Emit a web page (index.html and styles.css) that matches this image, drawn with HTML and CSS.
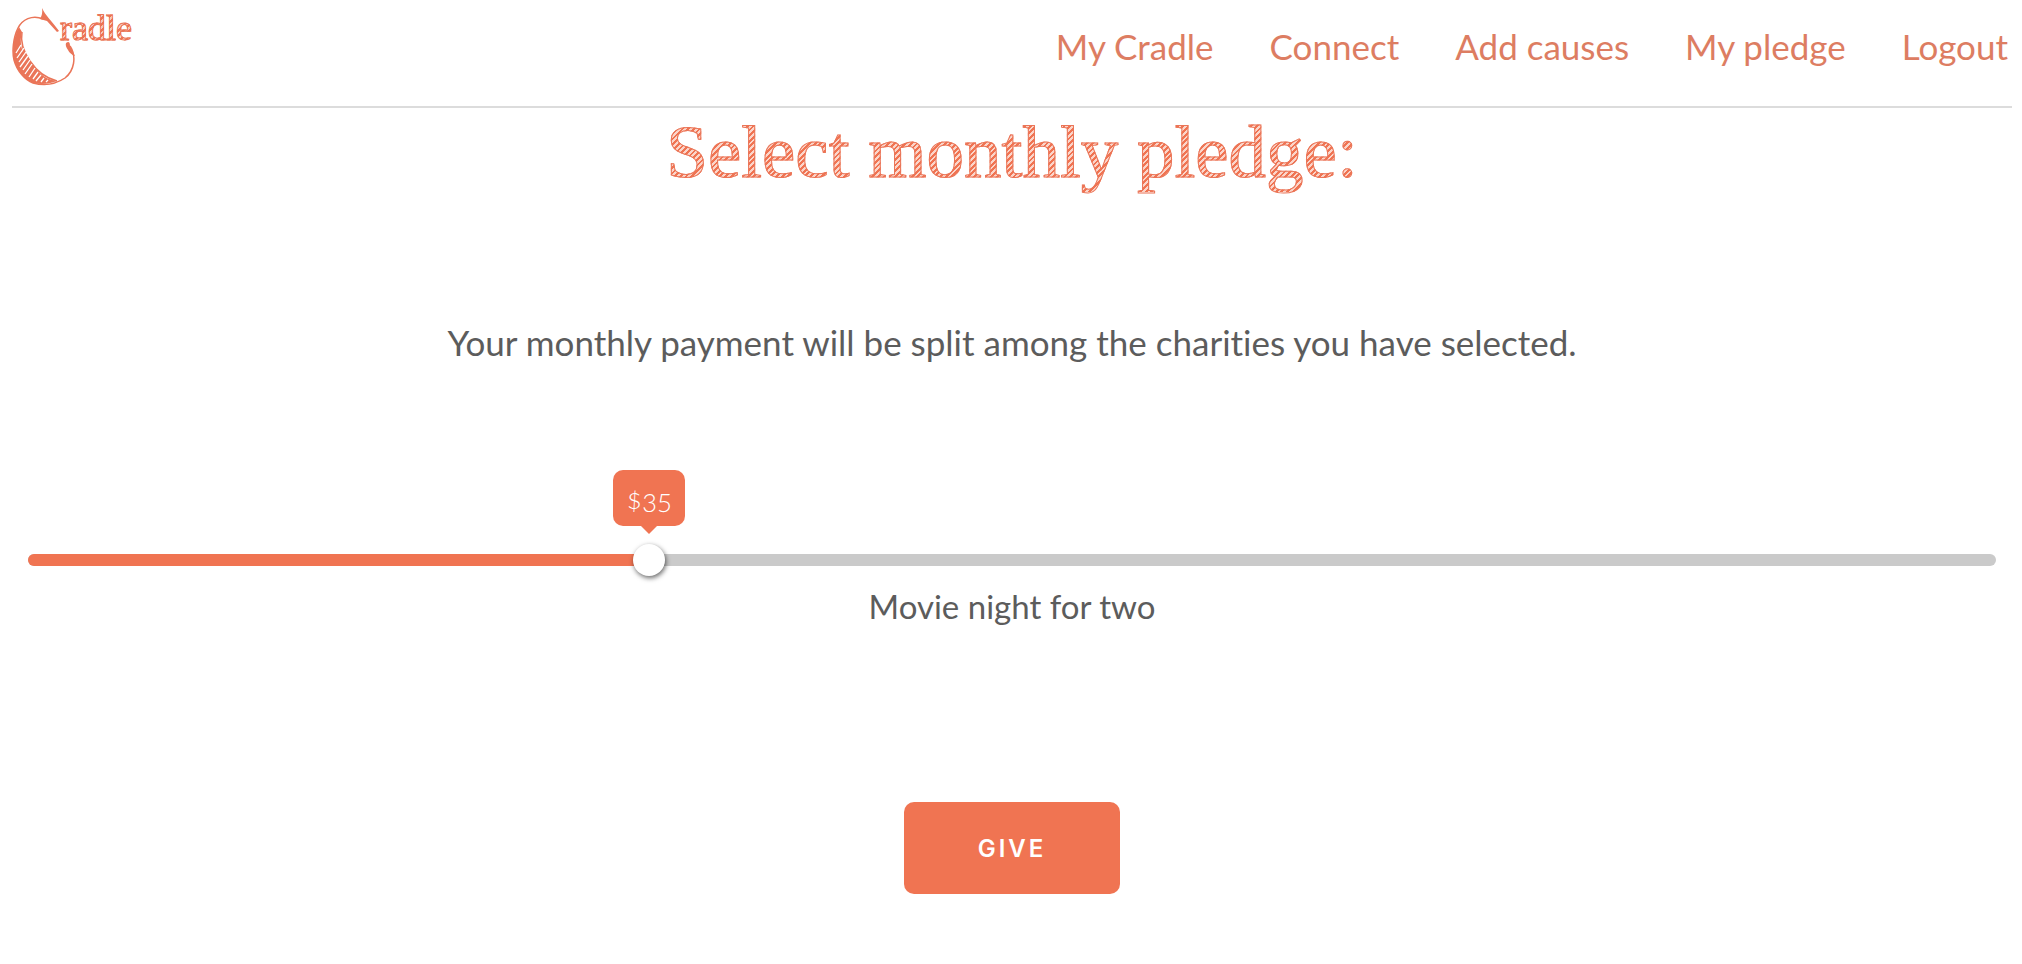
FILE: index.html
```html
<!DOCTYPE html>
<html lang="en">
<head>
<meta charset="utf-8">
<meta name="viewport" content="width=device-width, initial-scale=1">
<title>Cradle</title>
<link rel="stylesheet" href="styles.css">
</head>
<body>
<header class="header">
  <a class="logo" href="#" aria-label="Cradle">
    <svg class="logo-mark" viewBox="0 0 64 78" aria-hidden="true">
      <path class="logo-fill" d="M30 0 C33 7 40 13 47 23 L45 24 L35 13 L28 11 Q31 6 30 0Z"/>
      <path class="logo-line" d="M31 11 C20 6 10 12 6 20 C1 30 0 44 2 52 C5 63 13 72 21 75 C32 78 44 76 53 70 C62 63 65 49 58 38"/>
      <path class="logo-fill" d="M7 19 C1 30 0 44 2 52 C5 63 13 72 21 75 C29 77 37 76 45 73 C38 72 33 70 28 67 C22 63 18 58 15 53 C10 44 7 34 10 24Z"/>
      <path class="logo-line" d="M10 24 C8 36 13 46 18 53 C24 62 33 70 45 73"/>
      <path class="logo-fill" d="M9 28 C9 38 13 46 18 53 C24 62 31 69 40 73 L28 70 L12 54Z"/>
      <path class="logo-fill" d="M54 35 Q58 32 58 38 L63 48 Q58 46 56 42 Q53 38 54 35Z"/>
      <path class="logo-hatch" d="M4 45 L9 37 M5 50 L12 40 M7 54 L14 44 M8 59 L16 48 M11 62 L18 52 M13 66 L20 56 M17 69 L23 60 M21 71 L26 64 M24 73 L29 67 M29 74 L32 70 M34 74 L36 72"/>
    </svg>
    <span class="logo-text">radle</span>
  </a>
  <nav class="nav">
    <a href="#">My Cradle</a>
    <a href="#">Connect</a>
    <a href="#">Add causes</a>
    <a href="#">My pledge</a>
    <a href="#">Logout</a>
  </nav>
</header>
<main class="main">
  <h1 class="title">Select monthly pledge:</h1>
  <p class="intro">Your monthly payment will be split among the charities you have selected.</p>
  <form class="pledge">
    <div class="slider">
      <div class="rail">
        <div class="fill" style="width: 31.58%"></div>
        <output class="bubble" for="amount" style="left: 31.58%">$35</output>
      </div>
      <input class="range" id="amount" type="range" min="5" max="100" value="35" aria-label="Monthly pledge">
    </div>
    <label class="caption" for="amount">Movie night for two</label>
    <button class="give" type="button">GIVE</button>
  </form>
</main>
</body>
</html>
```
FILE: styles.css
```css
* { box-sizing: border-box; }

body {
  margin: 0;
  padding: 0 10px 0 12px;
  background: #fff;
  color: #5c5c5c;
  font-family: Lato, "Open Sans", sans-serif;
  font-size: 35px;
  line-height: 40px;
  font-variant-ligatures: none;
}

.header {
  display: flex;
  justify-content: space-between;
  align-items: flex-start;
  min-height: 108px;
  padding-top: 8px;
  border-bottom: 2px solid #dcdcdc;
}

.logo {
  display: flex;
  align-items: flex-start;
  color: #ea7558;
  text-decoration: none;
}

.logo-mark {
  width: 64px;
  height: 78px;
  margin-right: -16px;
}

.logo-fill { fill: #ea7558; }
.logo-line { fill: none; stroke: #ea7558; stroke-width: 1.5; }
.logo-hatch { fill: none; stroke: #fff; stroke-width: 1.3; }

.logo-text,
.title {
  font-family: "Liberation Serif", serif;
  color: transparent;
  background: repeating-linear-gradient(135deg, #f07452 0 2px, #fbd5ca 2px 4px);
  -webkit-background-clip: text;
  background-clip: text;
  -webkit-text-stroke: 1px #ea7558;
}

.logo-text {
  font-size: 36px;
  line-height: 40px;
}

.nav {
  display: flex;
  flex-wrap: wrap;
  gap: 0 56px;
  padding: 18px 4px 0 0;
}

.nav a {
  color: #dd7d62;
  text-decoration: none;
}

.main { text-align: center; }

.title {
  margin: 0;
  padding-top: 4px;
  font-size: 75px;
  line-height: 80px;
  font-weight: 400;
}

.intro { margin: 130px 0 0; }

.pledge {
  display: flex;
  flex-direction: column;
  align-items: center;
}

.slider {
  display: grid;
  align-items: center;
  width: 100%;
  margin-top: 182px;
}

.rail,
.range { grid-area: 1 / 1; }

.rail {
  position: relative;
  height: 12px;
  margin: 0 16px;
  border-radius: 6px;
  background: #cacaca;
}

.fill {
  height: 12px;
  border-radius: 6px;
  background: #f07452;
}

.bubble {
  position: absolute;
  bottom: 40px;
  transform: translateX(-50%);
  width: 72px;
  border-radius: 10px;
  background: #f07452;
  color: #fff;
  font-size: 28px;
  line-height: 56px;
  font-weight: 300;
  font-variant-numeric: oldstyle-nums;
}

.bubble::after {
  content: "";
  position: absolute;
  top: 100%;
  left: 50%;
  transform: translateX(-50%);
  border: 8px solid transparent;
  border-top-color: #f07452;
  border-bottom: 0;
}

.range {
  position: relative;
  -webkit-appearance: none;
  appearance: none;
  width: 100%;
  height: 32px;
  margin: 0;
  background: transparent;
}

.range::-webkit-slider-thumb {
  -webkit-appearance: none;
  width: 32px;
  height: 32px;
  border-radius: 50%;
  background: #fff;
  box-shadow: 1px 2px 5px rgba(0, 0, 0, 0.6);
}

.caption {
  margin-top: 10px;
  font-size: 33px;
}

.give {
  margin-top: 176px;
  width: 216px;
  height: 92px;
  border: 0;
  border-radius: 10px;
  background: #f07452;
  color: #fff;
  font-family: Inter, sans-serif;
  font-size: 24px;
  font-weight: 600;
  letter-spacing: 3px;
}
```
